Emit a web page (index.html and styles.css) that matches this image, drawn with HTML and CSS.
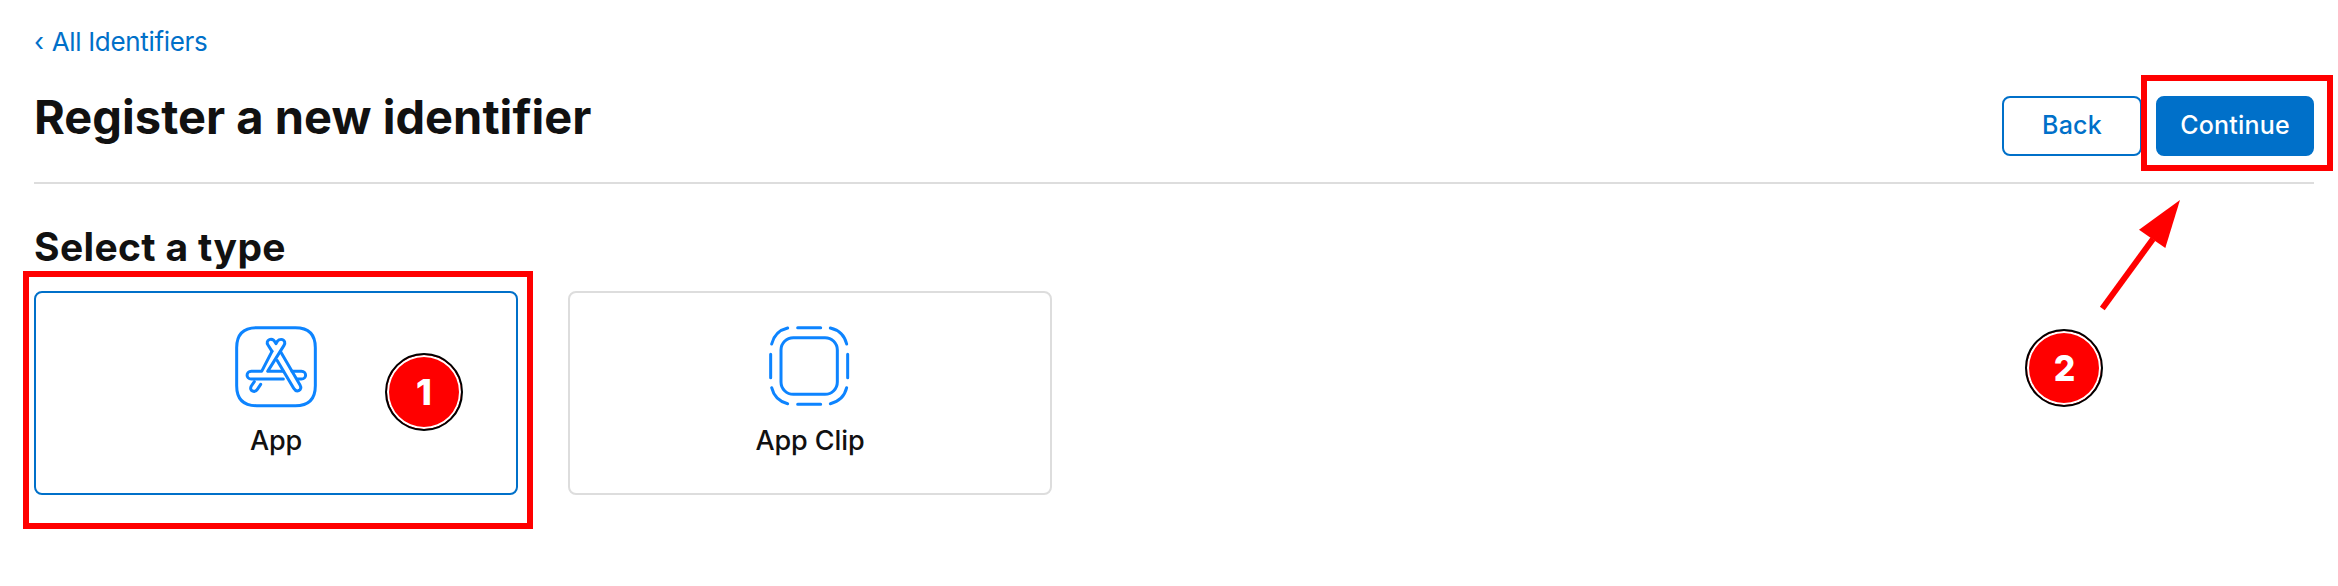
FILE: index.html
```html
<!DOCTYPE html>
<html lang="en">
<head>
<meta charset="utf-8">
<title>Register a new identifier</title>
<link rel="stylesheet" href="styles.css">
</head>
<body>
<main class="page">
  <a class="back-link"><span class="chevron">‹</span><span class="link-text">All Identifiers</span></a>
  <header class="header">
    <h1 class="title"><span>Register a new identifier</span></h1>
    <div class="actions">
      <button class="btn btn-outline"><span>Back</span></button>
      <button class="btn btn-solid"><span>Continue</span></button>
    </div>
  </header>
  <h2 class="subtitle"><span>Select a type</span></h2>
  <div class="cards">
    <div class="card selected">
      <svg class="icon" viewBox="42 45 252 252">
        <path d="M110 53H226C266 53 286 73 286 113V227C286 267 266 287 226 287H110C70 287 50 267 50 227V113C50 73 70 53 110 53Z"/>
        <path d="M156 124L144 105C134 90 157 78 168 101C178 78 202 90 192 106L143 184H190"/>
        <path d="M156 124L125 184H94C77 184 77 207 94 207H190"/>
        <path d="M172 152L221 235C230 250 249 240 240 225L181 124"/>
        <path d="M216 184H244C261 184 261 207 244 207H232"/>
        <path d="M103 215L94 228C86 242 104 250 112 238L122 223"/>
      </svg>
      <div class="card-label label-app"><span>App</span></div>
    </div>
    <div class="card">
      <svg class="icon" viewBox="84 45 252 252">
        <rect x="123" y="83" width="169" height="170" rx="37"/>
        <path d="M173 53H242M173 283H242M92 133V203M323 133V203"/>
        <path d="M95 102C101 77 118 60 143 54M271 54C296 60 314 77 320 102M95 233C101 258 118 275 143 281M271 281C296 275 314 258 320 233"/>
      </svg>
      <div class="card-label label-clip"><span>App Clip</span></div>
    </div>
  </div>
</main>
<div class="frame frame-type"></div>
<div class="frame frame-continue"></div>
<div class="badge badge-one"><span>1</span></div>
<div class="badge badge-two"><span>2</span></div>
<svg class="arrow" viewBox="0 0 90 116">
  <path class="shaft" d="M12.3 113.5L63 44"/>
  <path class="head" d="M90 5L49 34.7L75.3 53Z"/>
</svg>
</body>
</html>
```
FILE: styles.css
```css
* { box-sizing: border-box; }
body {
  margin: 0;
  background: #fff;
  color: #111;
  font-family: Inter, "Liberation Sans", sans-serif;
}
.page {
  width: 2338px;
  height: 586px;
  padding: 24px 24px 0 34px;
}
.back-link {
  display: flex;
  height: 36px;
  gap: 8px;
  line-height: 35px;
  font-size: 26px;
  letter-spacing: -0.33px;
  color: #0070c9;
}
.header {
  display: flex;
  justify-content: space-between;
  align-items: flex-start;
  height: 124px;
  padding-top: 36px;
  border-bottom: 2px solid #ddd;
}
.title {
  margin: -8px 0 0;
  font-size: 47px;
  line-height: 58px;
  font-weight: 700;
  letter-spacing: 0.03px;
}
.actions { display: flex; gap: 14px; }
.btn {
  height: 60px;
  padding: 0 0 2px;
  border: 2px solid #0070c9;
  border-radius: 8px;
  font: 500 25px/54px Inter, "Liberation Sans", sans-serif;
  letter-spacing: 0.2px;
}
.btn-outline { width: 140px; background: #fff; color: #0070c9; }
.btn-solid { width: 158px; background: #0070c9; color: #fff; }
.subtitle {
  margin: 39px 0 20px;
  font-size: 39px;
  line-height: 48px;
  font-weight: 700;
  letter-spacing: 0.35px;
}
.cards { display: flex; gap: 50px; }
.card {
  display: flex;
  flex-direction: column;
  align-items: center;
  width: 484px;
  height: 204px;
  padding-top: 32px;
  border: 2px solid #ddd;
  border-radius: 8px;
}
.selected { border-color: #0070c9; }
.icon {
  width: 84px;
  height: 84px;
  fill: none;
  stroke: #0d84ff;
  stroke-width: 9;
  stroke-linecap: round;
  stroke-linejoin: round;
}
.card-label {
  margin-top: 15px;
  font-size: 27px;
  line-height: 34px;
  font-weight: 500;
  letter-spacing: -0.1px;
}
.frame { position: absolute; border: 6px solid #f00; }
.frame-type { left: 23px; top: 271px; width: 510px; height: 258px; }
.frame-continue { left: 2141px; top: 75px; width: 192px; height: 96px; }
.badge {
  position: absolute;
  display: flex;
  align-items: center;
  justify-content: center;
  width: 78px;
  height: 78px;
  border: 2px solid #000;
  border-radius: 50%;
  background: #f00;
  box-shadow: inset 0 0 0 2px #fff;
  color: #fff;
  font-size: 36px;
  line-height: 44px;
  font-weight: 800;
}
.badge-one { left: 385px; top: 353px; }
.badge-two { left: 2025px; top: 329px; }
.badge-two span { transform: scaleX(0.94); }
.arrow { position: absolute; left: 2090px; top: 195px; width: 90px; height: 116px; }
.shaft { fill: none; stroke: #f00; stroke-width: 6; }
.head { fill: #f00; }
```
